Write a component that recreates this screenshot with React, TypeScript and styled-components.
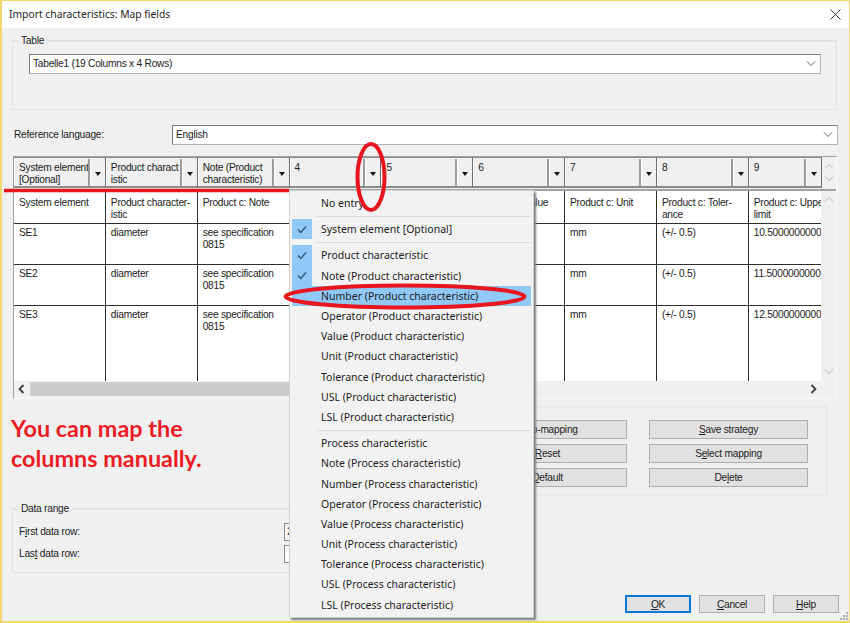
import React from 'react'
import styled, { createGlobalStyle } from 'styled-components'

const GlobalStyle = createGlobalStyle`
  html, body {
    margin: 0;
    padding: 0;
    background: #f0f0f0;
  }
  * {
    box-sizing: border-box;
  }
`

const Window = styled.div`
  position: relative;
  width: 850px;
  height: 623px;
  display: flex;
  flex-direction: column;
  overflow: hidden;
  border: solid #f3d66d;
  border-width: 1px 1px 2px 2px;
  background: #f0f0f0;
  color: #1c1c1c;
  font-family: 'Liberation Sans', Arial, sans-serif;
  font-size: 10.2px;
  letter-spacing: -0.25px;
  line-height: 12px;
`

const TitleBar = styled.header`
  flex: none;
  height: 27px;
  display: flex;
  align-items: center;
  justify-content: space-between;
  padding: 0 8px 1px 7px;
  background: #fff;
  font-family: 'Noto Sans', sans-serif;
  font-size: 10.3px;
  letter-spacing: 0;
`

const Body = styled.main`
  flex: 1;
  display: flex;
  flex-direction: column;
  padding: 5px 10px 0 10px;
`

const TableGroup = styled.fieldset`
  flex: none;
  width: 825px;
  height: 77px;
  margin: 0;
  padding: 6px 0 0 0;
  border: 1px solid #e2e2e2;
  border-top-width: 2px;
`

const GroupLegend = styled.legend`
  margin-left: 5px;
  padding: 1px 3px 0;
  line-height: 14px;
`

const Combo = styled.div<{ $width: number }>`
  width: ${p => p.$width}px;
  height: 20px;
  display: flex;
  align-items: center;
  justify-content: space-between;
  padding: 0 4px 0 3px;
  background: #fff;
  border: 1px solid #8a8a8a;
  border-color: #7a7a7a #b4b4b4 #b4b4b4 #7a7a7a;
`

const TableCombo = styled(Combo)`
  margin-left: 16px;
`

const LanguageRow = styled.div`
  flex: none;
  display: flex;
  align-items: center;
  height: 20px;
  margin-top: 15px;
  padding-left: 2px;
`

const LanguageLabel = styled.label`
  width: 158px;
`

const MapGrid = styled.section`
  flex: none;
  width: 824px;
  height: 243px;
  margin: 11px 0 0 1px;
  display: flex;
  flex-direction: column;
  border: 1px solid;
  border-color: #a0a0a0 #fafafa #fafafa #a0a0a0;
`

const HeaderBar = styled.div`
  flex: none;
  height: 34px;
  display: flex;
  border-bottom: 2px solid #a4a4a4;
`

const HeaderCells = styled.div`
  flex: none;
  width: 808px;
  display: grid;
  grid-template-columns: repeat(8, 91.85px) 1fr;
`

const HeaderCell = styled.div`
  display: flex;
  padding-top: 1px;
  height: 31px;
  border-right: 1.5px solid #6e6e6e;
  border-bottom: 2px solid #8c8c8c;
  border-top: 1px solid #8c8c8c;
  background: #f0f0f0;
`

const HeaderLabel = styled.div`
  flex: 1;
  min-width: 0;
  padding: 3px 0 0 4px;
  overflow: hidden;
  border-right: 2px solid #9c9c9c;
  border-left: 1px solid #fff;
  white-space: pre;
`

const HeaderArrow = styled.div`
  flex: none;
  width: 15px;
  display: flex;
  align-items: center;
  justify-content: center;
  padding-top: 3px;
  border-left: 1px solid #fff;
  &::after {
    content: '';
    border: 3.5px solid transparent;
    border-top: 4px solid #111;
    border-bottom: 0;
  }
`

const ScrollV = styled.div<{ $spread?: boolean }>`
  flex: 1;
  display: flex;
  flex-direction: column;
  align-items: center;
  justify-content: space-between;
  padding: ${p => (p.$spread ? '5px 0' : '4px 0')};
  background: #f0f0f0;
`

const GridBody = styled.div`
  flex: none;
  height: 190px;
  display: flex;
`

const DataArea = styled.div`
  flex: none;
  width: 807px;
  overflow: hidden;
  background: #fff;
`

const DataRows = styled.div`
  width: 827px;
  display: grid;
  grid-template-columns: repeat(9, 91.85px);
  grid-template-rows: 33px 41px 41px 75px;
`

const DataCell = styled.div<{ $head?: boolean; $last?: boolean }>`
  padding: ${p => (p.$head ? '6px' : '3px')} 0 0 5px;
  overflow: hidden;
  white-space: pre;
  border-right: 1px solid #2e2e2e;
  border-bottom: ${p => (p.$last ? 'none' : '1px solid #2e2e2e')};
`

const ScrollH = styled.div`
  flex: none;
  height: 16px;
  width: 807px;
  display: flex;
  align-items: center;
  background: #f0f0f0;
`

const ScrollEnd = styled.div`
  flex: none;
  width: 16px;
  display: flex;
  justify-content: center;
`

const ScrollThumb = styled.div`
  width: 380px;
  height: 14px;
  background: #cdcdcd;
`

const ScrollGap = styled.div`
  flex: 1;
`

const Lower = styled.div`
  flex: 1;
  display: flex;
  justify-content: space-between;
  min-height: 0;
`

const LeftColumn = styled.div`
  width: 430px;
  display: flex;
  flex-direction: column;
`

const Note = styled.p`
  margin: 14px 0 0 -1px;
  height: 88px;
  color: #ed1c24;
  font-family: Lato, 'Open Sans', sans-serif;
  font-weight: 700;
  font-size: 23.4px;
  letter-spacing: 0;
  line-height: 30px;
`

const RangeGroup = styled.fieldset`
  margin: 0;
  padding: 5px 0 0 0;
  height: 72px;
  border: 1px solid #e2e2e2;
  border-top-width: 2px;
`

const RangeRow = styled.div`
  display: flex;
  align-items: center;
  height: 22px;
  padding-left: 6px;
`

const RangeLabel = styled.label`
  width: 265px;
`

const RangeInput = styled.div`
  width: 100px;
  height: 18px;
  padding: 2px 0 0 2px;
  background: #fff;
  border: 1px solid #8a8a8a;
`

const MappingGroup = styled.div`
  width: 374px;
  height: 90px;
  margin: 7px 11px 0 0;
  display: grid;
  grid-template-columns: 159px 159px;
  grid-auto-rows: 19px;
  column-gap: 22px;
  row-gap: 5px;
  padding: 12px 0 0 12px;
  border: 2px solid #e8e8e8;
`

const DialogButton = styled.button<{ $focused?: boolean }>`
  padding: 1px 0 0;
  font: inherit;
  letter-spacing: inherit;
  color: inherit;
  background: #e1e1e1;
  border: ${p => (p.$focused ? '2px solid #0a78d7' : '1px solid #adadad')};
`

const Footer = styled.footer`
  flex: none;
  height: 28px;
  display: flex;
  justify-content: flex-end;
  gap: 8px;
  padding: 2px 0 7px;
`

const FooterButton = styled(DialogButton)`
  width: 66px;
  height: 18px;
`

const Menu = styled.div`
  position: absolute;
  left: 287px;
  top: 189px;
  width: 245px;
  height: 428px;
  padding: 2px;
  background: #f2f2f2;
  border: 1px solid #d0d0d0;
  box-shadow: 2px 2px 2px #7c7c7c;
  font-family: 'Noto Sans', sans-serif;
  letter-spacing: 0;
`

const MenuItem = styled.div<{ $active?: boolean }>`
  display: flex;
  align-items: center;
  height: 20.2px;
  background: ${p => (p.$active ? '#90c8f6' : 'transparent')};
  font-size: 10.5px;
`

const CheckSlot = styled.span<{ $checked?: boolean }>`
  flex: none;
  width: 20px;
  height: 100%;
  margin-right: 9px;
  display: flex;
  align-items: center;
  justify-content: center;
  background: ${p => (p.$checked ? '#90c8f6' : 'transparent')};
`

const MenuSeparator = styled.div`
  height: 6px;
  margin-left: 25px;
  display: flex;
  align-items: center;
  &::after {
    content: '';
    flex: 1;
    margin-right: 1px;
    border-top: 1px solid #d8d8d8;
  }
`

const Annotation = styled.svg`
  position: absolute;
  left: -2px;
  top: -1px;
  width: 850px;
  height: 623px;
  pointer-events: none;
`

const ResizeGrip = styled.svg`
  position: absolute;
  right: 0;
  bottom: 0;
  width: 10px;
  height: 10px;
`

const Chevron = ({ dir = 'down', color = '#606060' }: { dir?: 'up' | 'down' | 'left' | 'right'; color?: string }) => {
  const points = {
    down: '1,2.5 5,6.5 9,2.5',
    up: '1,6.5 5,2.5 9,6.5',
    left: '6.5,1 2.5,5 6.5,9',
    right: '3.5,1 7.5,5 3.5,9',
  }[dir]
  return (
    <svg width="10" height="10" viewBox="0 0 10 10" fill="none">
      <polyline points={points} stroke={color} strokeWidth={dir === 'left' || dir === 'right' ? 1.8 : 1} />
    </svg>
  )
}

const Check = () => (
  <svg width="10" height="9" viewBox="0 0 10 9" fill="none">
    <polyline points="1,4.5 3.8,7.5 9,1.5" stroke="#30536f" strokeWidth="1.3" />
  </svg>
)

const headers = [
  'System element\n[Optional]',
  'Product charact\nistic',
  'Note (Product\ncharacteristic)',
  '4',
  '5',
  '6',
  '7',
  '8',
  '9',
]

const rows = [
  ['System element', 'Product character-\nistic', 'Product c: Note', '', '', 'Product c: Value', 'Product c: Unit', 'Product c: Toler-\nance', 'Product c: Upper\nlimit'],
  ['SE1', 'diameter', 'see specification\n0815', '', '', '', 'mm', '(+/- 0.5)', '10.5000000000'],
  ['SE2', 'diameter', 'see specification\n0815', '', '', '', 'mm', '(+/- 0.5)', '11.5000000000'],
  ['SE3', 'diameter', 'see specification\n0815', '', '', '', 'mm', '(+/- 0.5)', '12.5000000000'],
]

type Entry = { label?: string; checked?: boolean; active?: boolean }

const menuEntries: Entry[] = [
  { label: 'No entry' },
  {},
  { label: 'System element [Optional]', checked: true },
  {},
  { label: 'Product characteristic', checked: true },
  { label: 'Note (Product characteristic)', checked: true },
  { label: 'Number (Product characteristic)', active: true },
  { label: 'Operator (Product characteristic)' },
  { label: 'Value (Product characteristic)' },
  { label: 'Unit (Product characteristic)' },
  { label: 'Tolerance (Product characteristic)' },
  { label: 'USL (Product characteristic)' },
  { label: 'LSL (Product characteristic)' },
  {},
  { label: 'Process characteristic' },
  { label: 'Note (Process characteristic)' },
  { label: 'Number (Process characteristic)' },
  { label: 'Operator (Process characteristic)' },
  { label: 'Value (Process characteristic)' },
  { label: 'Unit (Process characteristic)' },
  { label: 'Tolerance (Process characteristic)' },
  { label: 'USL (Process characteristic)' },
  { label: 'LSL (Process characteristic)' },
]

export default function App() {
  return (
    <>
      <GlobalStyle />
      <Window>
        <TitleBar>
          <span>Import characteristics: Map fields</span>
          <svg width="11" height="11" viewBox="0 0 11 11" fill="none">
            <path d="M0.5 0.5L10.5 10.5M10.5 0.5L0.5 10.5" stroke="#333" strokeWidth="1" />
          </svg>
        </TitleBar>
        <Body>
          <TableGroup>
            <GroupLegend>Table</GroupLegend>
            <TableCombo $width={792}>
              <span>Tabelle1 (19 Columns x 4 Rows)</span>
              <Chevron />
            </TableCombo>
          </TableGroup>
          <LanguageRow>
            <LanguageLabel>Reference language:</LanguageLabel>
            <Combo $width={666}>
              <span>English</span>
              <Chevron />
            </Combo>
          </LanguageRow>
          <MapGrid>
            <HeaderBar>
              <HeaderCells>
                {headers.map(h => (
                  <HeaderCell key={h}>
                    <HeaderLabel>{h}</HeaderLabel>
                    <HeaderArrow />
                  </HeaderCell>
                ))}
              </HeaderCells>
              <ScrollV $spread>
                <Chevron dir="up" color="#b4b4b4" />
                <Chevron color="#b4b4b4" />
              </ScrollV>
            </HeaderBar>
            <GridBody>
              <DataArea>
                <DataRows>
                  {rows.map((row, r) =>
                    row.map((text, c) => (
                      <DataCell key={`${r}-${c}`} $head={r === 0} $last={r === rows.length - 1}>
                        {text}
                      </DataCell>
                    )),
                  )}
                </DataRows>
              </DataArea>
              <ScrollV>
                <Chevron dir="up" color="#b4b4b4" />
                <Chevron color="#b4b4b4" />
              </ScrollV>
            </GridBody>
            <ScrollH>
              <ScrollEnd>
                <Chevron dir="left" color="#404040" />
              </ScrollEnd>
              <ScrollThumb />
              <ScrollGap />
              <ScrollEnd>
                <Chevron dir="right" color="#404040" />
              </ScrollEnd>
            </ScrollH>
          </MapGrid>
          <Lower>
            <LeftColumn>
              <Note>
                You can map the
                <br />
                columns manually.
              </Note>
              <RangeGroup>
                <GroupLegend>Data range</GroupLegend>
                <RangeRow>
                  <RangeLabel>
                    F<u>i</u>rst data row:
                  </RangeLabel>
                  <RangeInput>2</RangeInput>
                </RangeRow>
                <RangeRow>
                  <RangeLabel>
                    Las<u>t</u> data row:
                  </RangeLabel>
                  <RangeInput />
                </RangeRow>
              </RangeGroup>
            </LeftColumn>
            <MappingGroup>
              <DialogButton>
                <u>A</u>uto-mapping
              </DialogButton>
              <DialogButton>
                <u>S</u>ave strategy
              </DialogButton>
              <DialogButton>
                <u>R</u>eset
              </DialogButton>
              <DialogButton>
                S<u>e</u>lect mapping
              </DialogButton>
              <DialogButton>
                <u>D</u>efault
              </DialogButton>
              <DialogButton>
                De<u>l</u>ete
              </DialogButton>
            </MappingGroup>
          </Lower>
          <Footer>
            <FooterButton $focused>
              <u>O</u>K
            </FooterButton>
            <FooterButton>
              <u>C</u>ancel
            </FooterButton>
            <FooterButton>
              <u>H</u>elp
            </FooterButton>
          </Footer>
        </Body>
        <Menu>
          {menuEntries.map((entry, i) =>
            entry.label ? (
              <MenuItem key={i} $active={entry.active}>
                <CheckSlot $checked={entry.checked}>{entry.checked && <Check />}</CheckSlot>
                {entry.label}
              </MenuItem>
            ) : (
              <MenuSeparator key={i} />
            ),
          )}
        </Menu>
        <Annotation viewBox="0 0 850 623" fill="none">
          <line x1="4" y1="190.5" x2="289" y2="190.5" stroke="#e8141e" strokeWidth="3.5" />
          <ellipse cx="371" cy="177" rx="13.5" ry="33" stroke="#e8141e" strokeWidth="4" />
          <ellipse cx="405" cy="296.5" rx="119.5" ry="11" stroke="#e8141e" strokeWidth="4" />
        </Annotation>
        <ResizeGrip viewBox="0 0 10 10" fill="#b0b0b0">
          <rect x="7" y="1" width="2" height="2" />
          <rect x="4" y="4" width="2" height="2" />
          <rect x="7" y="4" width="2" height="2" />
          <rect x="1" y="7" width="2" height="2" />
          <rect x="4" y="7" width="2" height="2" />
          <rect x="7" y="7" width="2" height="2" />
        </ResizeGrip>
      </Window>
    </>
  )
}
